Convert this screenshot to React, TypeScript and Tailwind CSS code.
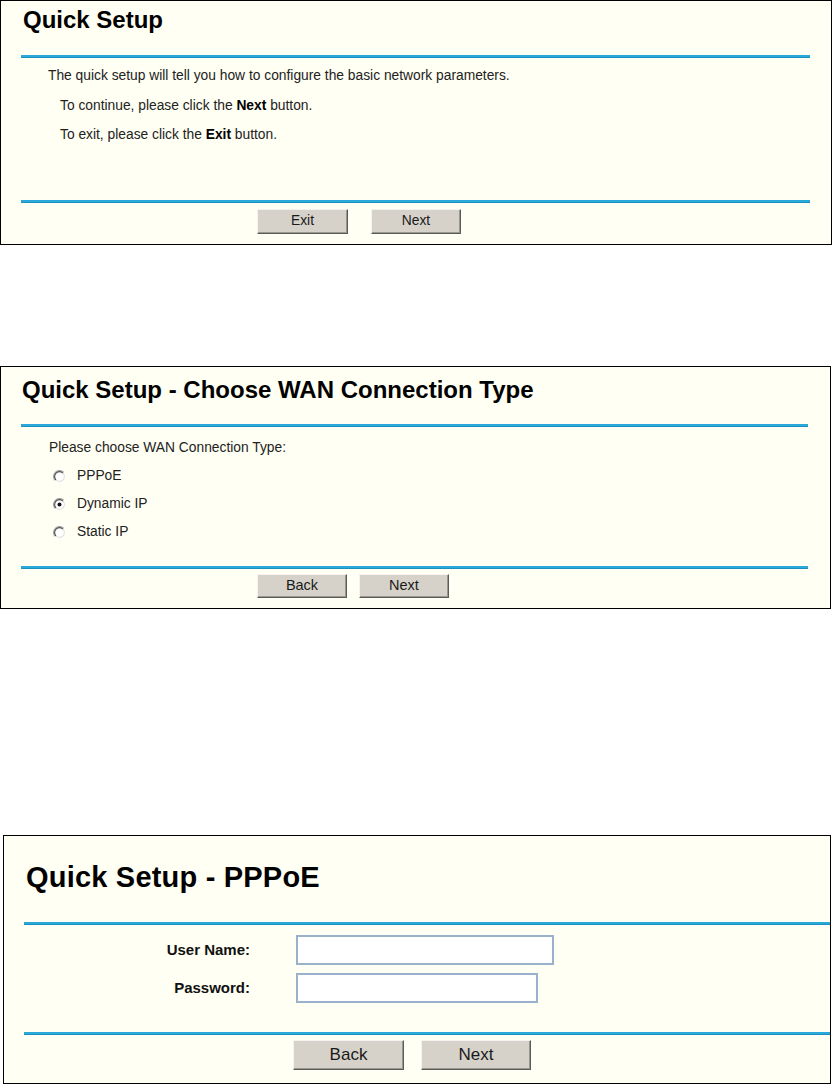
import type { ReactNode } from "react";

const font = { fontFamily: '"Liberation Sans", Arial, sans-serif' };

function BlueLine() {
  return <div className="h-[3px] border-t-2 border-b border-t-[#2aa8da] border-b-[#1d90c2]" />;
}

function WinButton({
  label,
  className,
}: {
  label: string;
  className: string;
}) {
  return (
    <button
      type="button"
      className={`flex items-center justify-center border border-t-[#f4f3ef] border-l-[#f4f3ef] border-r-[#5a5a5a] border-b-[#5a5a5a] bg-[#d6d2ca] text-[#1a1a1a] shadow-[inset_-1px_-1px_0_#9a978f] ${className}`}
    >
      {label}
    </button>
  );
}

function Radio({ checked }: { checked?: boolean }) {
  return (
    <svg width="13" height="13" viewBox="0 0 12 12" className="shrink-0">
      <circle cx="6" cy="6" r="5.2" fill="#ffffff" />
      <path d="M2.1 9.9 A5.5 5.5 0 0 1 9.9 2.1" fill="none" stroke="#a0a0a0" strokeWidth="1" />
      <path d="M2.8 9.2 A4.5 4.5 0 0 1 9.2 2.8" fill="none" stroke="#454545" strokeWidth="1" />
      <path d="M9.9 2.1 A5.5 5.5 0 0 1 2.1 9.9" fill="none" stroke="#ffffff" strokeWidth="1" />
      <path d="M9.2 2.8 A4.5 4.5 0 0 1 2.8 9.2" fill="none" stroke="#e2e0da" strokeWidth="1" />
      {checked && <circle cx="6" cy="6" r="1.8" fill="#111111" />}
    </svg>
  );
}

function Panel({ className, children }: { className: string; children: ReactNode }) {
  return <div className={`border border-black bg-[#fffff3] ${className}`}>{children}</div>;
}

function WelcomePanel() {
  return (
    <Panel className="h-[245px] w-[832px]">
      <div className="ml-[20px] w-[789px]">
        <h1 className="pl-[2px] pt-[7px] text-[24px] font-bold leading-[24px] text-black">Quick Setup</h1>
        <div className="mt-[23px]">
          <BlueLine />
        </div>
        <div className="pt-[3px] text-[13.8px] leading-[29.5px] text-[#222]">
          <p className="pl-[27px]">The quick setup will tell you how to configure the basic network parameters.</p>
          <p className="pl-[39px]">
            To continue, please click the <b className="text-black">Next</b> button.
          </p>
          <p className="pl-[39px]">
            To exit, please click the <b className="text-black">Exit</b> button.
          </p>
        </div>
        <div className="mt-[50px]">
          <BlueLine />
        </div>
      </div>
      <div className="mt-[6px] flex gap-[23px] pl-[256px] text-[13.8px]">
        <WinButton label="Exit" className="h-[25px] w-[91px]" />
        <WinButton label="Next" className="h-[25px] w-[90px]" />
      </div>
    </Panel>
  );
}

function WanPanel() {
  const options = [
    { label: "PPPoE", checked: false },
    { label: "Dynamic IP", checked: true },
    { label: "Static IP", checked: false },
  ];
  return (
    <Panel className="mt-[121px] h-[243px] w-[831px]">
      <div className="ml-[20px] w-[787px]">
        <h1 className="pl-[1px] pt-[11px] text-[24px] font-bold leading-[24px] text-black">
          Quick Setup - Choose WAN Connection Type
        </h1>
        <div className="mt-[22px]">
          <BlueLine />
        </div>
        <div className="pt-[7px] text-[13.8px] leading-[28px] text-[#222]">
          <p className="pl-[28px]">Please choose WAN Connection Type:</p>
          {options.map((o) => (
            <div key={o.label} className="flex h-[28px] items-center gap-[11px] pl-[32px]">
              <Radio checked={o.checked} />
              <span>{o.label}</span>
            </div>
          ))}
        </div>
        <div className="mt-[20px]">
          <BlueLine />
        </div>
      </div>
      <div className="mt-[5px] flex gap-[12px] pl-[256px] text-[14.5px]">
        <WinButton label="Back" className="h-[24px] w-[90px]" />
        <WinButton label="Next" className="h-[24px] w-[90px]" />
      </div>
    </Panel>
  );
}

function PppoePanel() {
  return (
    <Panel className="ml-[3px] mt-[226px] h-[249px] w-[828px]">
      <div className="ml-[20px]">
        <h1 className="pl-[2px] pt-[27px] text-[29px] font-bold leading-[29px] tracking-[0.2px] text-black">
          Quick Setup - PPPoE
        </h1>
        <div className="mt-[30px]">
          <BlueLine />
        </div>
        <div className="mt-[10px] grid grid-cols-[226px_auto] items-center gap-x-[46px] gap-y-[8px] text-[15px] font-bold text-[#111]">
          <label className="text-right">User Name:</label>
          <input
            type="text"
            className="h-[30px] w-[258px] border-2 border-[#9ab1cc] bg-white outline-none"
          />
          <label className="text-right">Password:</label>
          <input
            type="password"
            className="h-[30px] w-[242px] border-2 border-[#9ab1cc] bg-white outline-none"
          />
        </div>
        <div className="mt-[29px]">
          <BlueLine />
        </div>
      </div>
      <div className="mt-[5px] flex gap-[17px] pl-[289px] text-[17px]">
        <WinButton label="Back" className="h-[30px] w-[111px]" />
        <WinButton label="Next" className="h-[30px] w-[110px]" />
      </div>
    </Panel>
  );
}

export default function App() {
  return (
    <div className="flex h-[1088px] w-[832px] flex-col bg-white" style={font}>
      <WelcomePanel />
      <WanPanel />
      <PppoePanel />
    </div>
  );
}
